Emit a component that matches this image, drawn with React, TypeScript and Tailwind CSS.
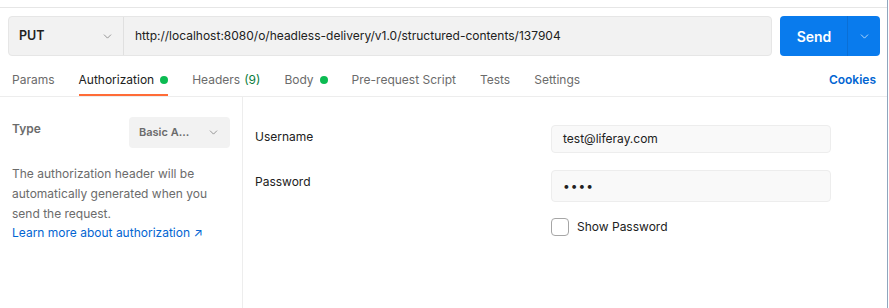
import { ChevronDown } from "lucide-react";

const tabs = [
  { label: "Params" },
  { label: "Authorization", dot: true, active: true },
  { label: "Headers", count: "(9)" },
  { label: "Body", dot: true },
  { label: "Pre-request Script" },
  { label: "Tests" },
  { label: "Settings" },
];

export default function App() {
  return (
    <div
      className="w-[889px] h-[308px] bg-white overflow-hidden"
      style={{ fontFamily: "Inter, 'Noto Sans', sans-serif" }}
    >
      <div className="w-[888px] h-full border-r border-[#8fa6be] flex flex-col">
        <div className="h-[7px]" />
        <div className="border-t border-[#e6e6e6] pt-2 pl-2 pr-[7px] flex gap-2">
          {/* method + url */}
          <div className="flex h-10 flex-1 rounded-[4px] border border-[#e6e6e6] bg-[#f2f2f2]">
            <div className="flex w-[115px] items-center justify-between border-r border-[#e0e0e0] pl-[10px] pr-[9px]">
              <span className="text-[12.5px] font-semibold text-[#212121]">PUT</span>
              <ChevronDown size={13} strokeWidth={1.25} className="text-[#6b6b6b]" />
            </div>
            <div className="flex items-center pl-[11px] text-[12px] text-[#212121]">
              http://localhost:8080/o/headless-delivery/v1.0/structured-contents/137904
            </div>
          </div>
          {/* send */}
          <div className="flex h-10 w-[100px] rounded-[4px] bg-[#097bed] text-white">
            <div className="flex w-[67px] items-center justify-center pl-[1px] text-[14px] font-semibold">
              Send
            </div>
            <div className="flex flex-1 items-center justify-center border-l border-[#0a6fd6]">
              <ChevronDown size={13} strokeWidth={1.25} />
            </div>
          </div>
        </div>

        {/* tabs */}
        <div className="mt-[6px] flex h-[35px] items-stretch border-b border-[#ededed] pl-3 pr-[11px]">
          <div className="flex flex-1 gap-6">
            {tabs.map((t) => (
              <div
                key={t.label}
                className={
                  "flex items-center gap-[6px] border-b-2 pt-[3px] text-[12px] " +
                  (t.active
                    ? "border-[#ff6c37] text-[#212121]"
                    : "border-transparent text-[#6b6b6b]")
                }
              >
                <span>{t.label}</span>
                {t.count && <span className="-ml-[2px] text-[#0a7c3c]">{t.count}</span>}
                {t.dot && <span className="h-2 w-2 rounded-full bg-[#0cbb52]" />}
              </div>
            ))}
          </div>
          <div className="flex items-center pt-[1px] text-[12px] font-semibold text-[#0265d2]">
            Cookies
          </div>
        </div>

        {/* body */}
        <div className="flex flex-1">
          <div className="w-[243px] border-r border-[#ededed] px-3 pt-5">
            <div className="flex items-start justify-between">
              <span className="pt-[3px] text-[12px] font-semibold text-[#6b6b6b]">Type</span>
              <div className="flex h-[31px] w-[101px] items-center justify-between rounded-[4px] bg-[#f2f2f2] pl-[10px] pr-[10px]">
                <span className="text-[11px] font-semibold text-[#6b6b6b]">Basic A...</span>
                <ChevronDown size={13} strokeWidth={1.25} className="text-[#6b6b6b]" />
              </div>
            </div>
            <p className="mt-4 text-[12px] leading-5 text-[#6b6b6b]">
              The authorization header will be automatically generated when you send the
              request.
            </p>
            <a className="block text-[12px] leading-[18px] text-[#0265d2]">
              Learn more about authorization ↗
            </a>
          </div>

          <div className="flex-1 pl-3 pr-[56px] pt-7">
            <div className="flex">
              <span className="flex-1 pt-[2px] text-[12px] leading-5 text-[#212121]">Username</span>
              <div className="flex h-[28px] w-[280px] items-center rounded-[4px] border border-[#ededed] bg-[#f9f9f9] pl-[11px] text-[12px] text-[#212121]">
                test@liferay.com
              </div>
            </div>
            <div className="mt-[17px] flex">
              <span className="flex-1 pt-[2px] text-[12px] leading-5 text-[#212121]">Password</span>
              <div className="flex h-[32px] w-[280px] items-center rounded-[4px] border border-[#ededed] bg-[#f9f9f9] pl-[11px] text-[12px] tracking-[1px] text-[#212121]">
                ••••
              </div>
            </div>
            <div className="mt-4 flex">
              <span className="flex-1" />
              <div className="flex w-[280px] items-center gap-[8px]">
                <span className="h-[18px] w-[18px] rounded-[4px] border border-[#a6a6a6] bg-white" />
                <span className="text-[12px] text-[#212121]">Show Password</span>
              </div>
            </div>
          </div>
        </div>
      </div>
    </div>
  );
}
